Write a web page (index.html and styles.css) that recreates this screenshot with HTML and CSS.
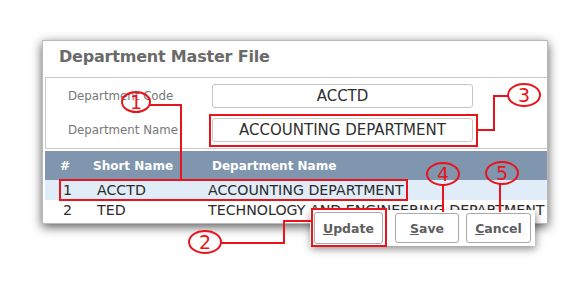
FILE: index.html
```html
<!DOCTYPE html>
<html lang="en">
<head>
    <meta charset="UTF-8">
    <title>Department Master File</title>
    <link rel="stylesheet" href="styles.css">
</head>
<body>
    <div class="stage">
        <div class="window">
            <h1 class="title">Department Master File</h1>

            <div class="form-panel">
                <div class="form-row">
                    <label for="code">Department Code</label>
                    <input type="text" id="code" value="ACCTD">
                </div>
                <div class="form-row">
                    <label for="name">Department Name</label>
                    <input type="text" id="name" value="ACCOUNTING DEPARTMENT">
                </div>
            </div>

            <div class="grid">
                <div class="grid-row grid-head">
                    <span class="c-num">#</span>
                    <span class="c-short">Short Name</span>
                    <span class="c-name">Department Name</span>
                </div>
                <div class="grid-row selected">
                    <span class="c-num">1</span>
                    <span class="c-short">ACCTD</span>
                    <span class="c-name">ACCOUNTING DEPARTMENT</span>
                </div>
                <div class="grid-row">
                    <span class="c-num">2</span>
                    <span class="c-short">TED</span>
                    <span class="c-name">TECHNOLOGY AND ENGINEERING DEPARTMENT</span>
                </div>
            </div>
        </div>

        <div class="button-bar">
            <button class="btn btn-update"><u>U</u>pdate</button>
            <button class="btn btn-save"><u>S</u>ave</button>
            <button class="btn btn-cancel"><u>C</u>ancel</button>
        </div>

        <!-- callouts -->
        <svg class="callouts" width="565" height="283" viewBox="0 0 565 283">
            <g fill="none" stroke="#e8141b" stroke-width="2">
                <rect x="60" y="180" width="347" height="20"/>
                <rect x="210" y="115" width="267" height="31"/>
                <rect x="312" y="209" width="74" height="37"/>
                <polyline points="150,105 181,105 181,180"/>
                <polyline points="508,96 494,96 494,130 477,130"/>
                <polyline points="221,243 284,243 284,221 312,221"/>
                <polyline points="443,185 443,212"/>
                <polyline points="500,184 500,212"/>
                <ellipse cx="136" cy="102" rx="14" ry="10"/>
                <ellipse cx="524" cy="95" rx="16" ry="11"/>
                <ellipse cx="205" cy="242" rx="16" ry="11"/>
                <ellipse cx="443" cy="174" rx="16" ry="11"/>
                <ellipse cx="502" cy="173" rx="16" ry="11"/>
            </g>
            <g class="callout-num" fill="#e8141b">
                <text x="136" y="109">1</text>
                <text x="524" y="102">3</text>
                <text x="205" y="249">2</text>
                <text x="443" y="181">4</text>
                <text x="502" y="180">5</text>
            </g>
        </svg>
    </div>
</body>
</html>
```

FILE: styles.css
```css
* {
    margin: 0;
    padding: 0;
    box-sizing: border-box;
}

body {
    background: #fff;
    font-family: 'DejaVu Sans', 'Liberation Sans', sans-serif;
}

.stage {
    position: relative;
    width: 565px;
    height: 283px;
    overflow: hidden;
    padding: 40px 0 0 42px;
}

.window {
    width: 506px;
    height: 184px;
    background: #fff;
    border: 1px solid #b9b9b9;
    box-shadow: 0 3px 10px rgba(0, 0, 0, 0.65);
    overflow: hidden;
    padding: 0 0 0 2px;
}

.title {
    height: 36px;
    padding: 6px 0 0 14px;
    font-size: 16px;
    font-weight: bold;
    color: #6a6a6a;
    letter-spacing: -0.2px;
}

.form-panel {
    border: 1px solid #c9c9c9;
    border-right: none;
    height: 72px;
    padding: 6px 0 0 22px;
    display: flex;
    flex-direction: column;
    gap: 10px;
}

.form-row {
    display: flex;
    align-items: center;
}

.form-row label {
    width: 144px;
    font-size: 11.8px;
    color: #777;
}

.form-row input {
    width: 261px;
    height: 24px;
    border: 1px solid #c6c6c6;
    border-radius: 3px;
    text-align: center;
    font-family: 'DejaVu Sans', sans-serif;
    font-size: 15px;
    color: #2f2f2f;
    background: #fff;
}

.grid {
    margin-top: 2px;
}

.grid-row {
    display: grid;
    grid-template-columns: 48px 119px 1fr;
    height: 20px;
    align-items: center;
    font-size: 14.2px;
    color: #2b2b2b;
    white-space: nowrap;
}

.grid-head {
    height: 29px;
    background: #7f96ae;
    color: #fff;
    font-weight: bold;
    font-size: 12px;
}

.grid-row.selected {
    background: #e0edf8;
}

.c-num { padding-left: 18px; }
.c-short { padding-left: 4px; }
.c-name { margin-left: -4px; overflow: hidden; }

.grid-head .c-num { padding-left: 15px; }
.grid-head .c-short { padding-left: 0; }
.grid-head .c-name { margin-left: 0; }

.button-bar {
    position: absolute;
    left: 310px;
    top: 210px;
    width: 225px;
    height: 36px;
    background: #fff;
    box-shadow: 1px 3px 8px rgba(0, 0, 0, 0.45);
    display: flex;
    align-items: center;
    gap: 7px;
    padding: 0 0 0 4px;
}

.btn {
    height: 30px;
    background: #fff;
    border: 1px solid #a9a9a9;
    border-radius: 3px;
    font-family: 'DejaVu Sans', sans-serif;
    font-size: 12.5px;
    font-weight: bold;
    color: #5e5e5e;
}

.btn-update { width: 69px; height: 32px; margin-right: 5px; }
.btn-save { width: 64px; }
.btn-cancel { width: 65px; }

.callouts {
    position: absolute;
    left: 0;
    top: 0;
}

.callout-num text {
    font-family: 'DejaVu Sans', sans-serif;
    font-size: 19px;
    text-anchor: middle;
}
```
